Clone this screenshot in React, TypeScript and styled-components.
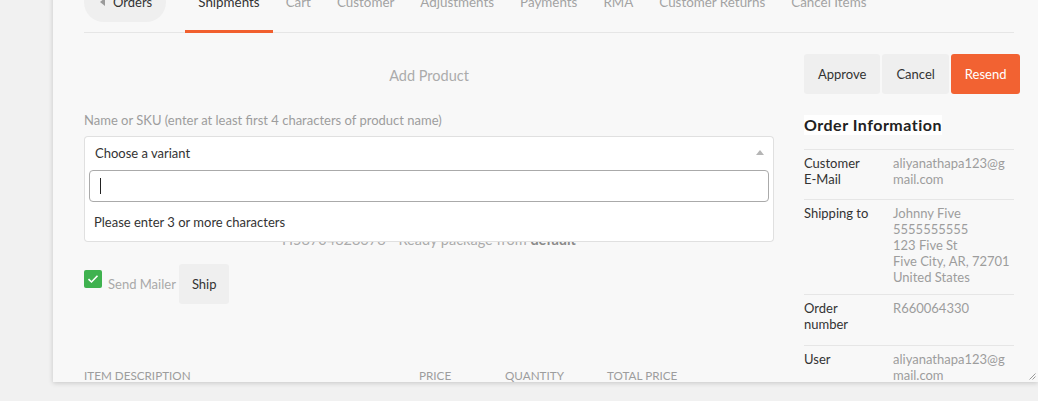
import React from "react";
import styled, { createGlobalStyle } from "styled-components";

const Global = createGlobalStyle`
  html, body { margin: 0; padding: 0; background: #f1f1f1; overflow: hidden; }
  body { font-family: Lato, "Open Sans", sans-serif; color: #333; }
  * { box-sizing: border-box; }
`;

const Stage = styled.div`
  display: flow-root;
  height: 401px;
  padding-left: 53px;
  overflow: hidden;
`;

const Panel = styled.div`
  position: relative;
  margin-top: -40px;
  height: 422px;
  background: #f8f8f8;
  box-shadow: 0 1px 5px rgba(0, 0, 0, 0.18);
  padding: 0 24px 0 31px;
  overflow: hidden;
`;

const TabBar = styled.div`
  display: flex;
  align-items: flex-end;
  height: 73px;
  border-bottom: 1px solid #e6e6e6;
`;

const OrdersButton = styled.div`
  display: flex;
  align-items: center;
  gap: 8px;
  height: 40px;
  margin: 0 19px 10px 0;
  padding: 0 14px 0 16px;
  border-radius: 20px;
  background: #efefef;
  font-size: 13px;
  color: #333;
`;

const LeftTri = styled.span`
  width: 0;
  height: 0;
  border-top: 4px solid transparent;
  border-bottom: 4px solid transparent;
  border-right: 5px solid #9a9a9a;
`;

const Tab = styled.div<{ $active?: boolean }>`
  padding: 0 13px 19px;
  margin-bottom: -1px;
  border-bottom: 3px solid ${(p) => (p.$active ? "#f15f2e" : "transparent")};
  font-size: 13.4px;
  line-height: 17px;
  color: ${(p) => (p.$active ? "#333" : "#a3a3a3")};
  white-space: nowrap;
`;

const Body = styled.div`
  display: grid;
  grid-template-columns: 690px 210px;
  column-gap: 30px;
`;

const LeftCol = styled.div`
  display: flex;
  flex-direction: column;
`;

const AddProduct = styled.div`
  margin-top: 34px;
  text-align: center;
  font-size: 14.5px;
  line-height: 18px;
  color: #ababab;
`;

const FieldLabel = styled.div`
  margin-top: 27px;
  font-size: 13px;
  line-height: 16px;
  color: #9d9d9d;
`;

const SelectWrap = styled.div`
  position: relative;
  z-index: 2;
  margin-top: 8px;
  height: 32px;
  padding: 0 10px;
  border: 1px solid #e0e0e0;
  border-bottom: none;
  border-radius: 4px 4px 0 0;
  background: #fff;
  font-size: 13px;
  line-height: 32px;
  color: #333;
`;

const UpArrow = styled.span`
  position: absolute;
  right: 9px;
  top: 13px;
  width: 0;
  height: 0;
  border-left: 4px solid transparent;
  border-right: 4px solid transparent;
  border-bottom: 5px solid #b5b5b5;
`;

const Dropdown = styled.div`
  position: absolute;
  top: 100%;
  left: -1px;
  right: -1px;
  padding: 2px 4px 0;
  border: 1px solid #e0e0e0;
  border-top: none;
  border-radius: 0 0 4px 4px;
  background: #fff;
`;

const SearchBox = styled.div`
  display: flex;
  align-items: center;
  height: 32px;
  padding-left: 10px;
  border: 1px solid #aaa;
  border-radius: 4px;
  background: #fff;
`;

const Caret = styled.span`
  width: 1px;
  height: 16px;
  background: #222;
`;

const Results = styled.div`
  padding: 12px 5px 11px;
  font-size: 13px;
  line-height: 16px;
  color: #333;
`;

const ShipmentInfo = styled.div`
  margin-top: 63px;
  text-align: center;
  font-size: 14.5px;
  line-height: 17px;
  color: #ababab;
  b { color: #8a8a8a; }
`;

const MailerRow = styled.div`
  display: flex;
  align-items: center;
  height: 40px;
  margin-top: 16px;
`;

const CheckBox = styled.span`
  display: flex;
  align-items: center;
  justify-content: center;
  align-self: flex-start;
  width: 18px;
  height: 18px;
  margin: 6px 6px 0 0;
  border-radius: 2px;
  background: #3fb24f;
`;

const MailerText = styled.span`
  margin-right: 3px;
  font-size: 13px;
  color: #a9a9a9;
`;

const GrayButton = styled.div`
  display: flex;
  align-items: center;
  height: 40px;
  padding: 0 13px;
  border-radius: 3px;
  background: #efefef;
  font-size: 13px;
  color: #333;
`;

const TableHead = styled.div`
  display: grid;
  grid-template-columns: 335px 86px 102px auto;
  margin-top: 64px;
  font-size: 11.7px;
  line-height: 14px;
  color: #9d9d9d;
  text-transform: uppercase;
`;

const RightCol = styled.div`
  display: flex;
  flex-direction: column;
`;

const ActionRow = styled.div`
  display: flex;
  gap: 2px;
  margin-top: 21px;
  white-space: nowrap;
`;

const ActionButton = styled.div<{ $primary?: boolean }>`
  display: flex;
  align-items: center;
  height: 40px;
  padding: 0 14px;
  border-radius: 3px;
  background: ${(p) => (p.$primary ? "#f26232" : "#efefef")};
  color: ${(p) => (p.$primary ? "#fff" : "#333")};
  font-size: 13px;
`;

const Heading = styled.div`
  align-self: flex-start;
  margin: 21px 0 14px;
  background: #fff;
  font-size: 16px;
  font-weight: 700;
  line-height: 20px;
  letter-spacing: 0.5px;
  color: #222;
`;

const InfoRow = styled.div<{ $pb: number }>`
  display: grid;
  grid-template-columns: 89px 1fr;
  padding: 5px 0 ${(p) => p.$pb}px;
  border-top: 1px solid #e6e6e6;
  font-size: 13px;
  line-height: 16px;
`;

const InfoLabel = styled.div`
  padding-right: 20px;
  color: #333;
`;

const InfoValue = styled.div`
  color: #9d9d9d;
  word-break: break-all;
`;

const Resize = styled.svg`
  position: absolute;
  right: 2px;
  bottom: 2px;
`;

const tabs = [
  "Shipments",
  "Cart",
  "Customer",
  "Adjustments",
  "Payments",
  "RMA",
  "Customer Returns",
  "Cancel Items",
];

export default function App() {
  return (
    <>
      <Global />
      <Stage>
        <Panel>
          <TabBar>
            <OrdersButton>
              <LeftTri />
              Orders
            </OrdersButton>
            {tabs.map((t, i) => (
              <Tab key={t} $active={i === 0}>
                {t}
              </Tab>
            ))}
          </TabBar>
          <Body>
            <LeftCol>
              <AddProduct>Add Product</AddProduct>
              <FieldLabel>
                Name or SKU (enter at least first 4 characters of product name)
              </FieldLabel>
              <SelectWrap>
                Choose a variant
                <UpArrow />
                <Dropdown>
                  <SearchBox>
                    <Caret />
                  </SearchBox>
                  <Results>Please enter 3 or more characters</Results>
                </Dropdown>
              </SelectWrap>
              <ShipmentInfo>
                H58704828678 - Ready package from <b>default</b>
              </ShipmentInfo>
              <MailerRow>
                <CheckBox>
                  <svg width="12" height="10" viewBox="0 0 12 10">
                    <path
                      d="M1.5 5.2 L4.5 8 L10.5 1.8"
                      fill="none"
                      stroke="#fff"
                      strokeWidth="1.6"
                    />
                  </svg>
                </CheckBox>
                <MailerText>Send Mailer</MailerText>
                <GrayButton>Ship</GrayButton>
              </MailerRow>
              <TableHead>
                <span>Item Description</span>
                <span>Price</span>
                <span>Quantity</span>
                <span>Total Price</span>
              </TableHead>
            </LeftCol>
            <RightCol>
              <ActionRow>
                <ActionButton>Approve</ActionButton>
                <ActionButton>Cancel</ActionButton>
                <ActionButton $primary>Resend</ActionButton>
              </ActionRow>
              <Heading>Order Information</Heading>
              <InfoRow $pb={12}>
                <InfoLabel>Customer E-Mail</InfoLabel>
                <InfoValue>aliyanathapa123@gmail.com</InfoValue>
              </InfoRow>
              <InfoRow $pb={9}>
                <InfoLabel>Shipping to</InfoLabel>
                <InfoValue>
                  Johnny Five
                  <br />
                  5555555555
                  <br />
                  123 Five St
                  <br />
                  Five City, AR, 72701
                  <br />
                  United States
                </InfoValue>
              </InfoRow>
              <InfoRow $pb={13}>
                <InfoLabel>Order number</InfoLabel>
                <InfoValue>R660064330</InfoValue>
              </InfoRow>
              <InfoRow $pb={12}>
                <InfoLabel>User</InfoLabel>
                <InfoValue>aliyanathapa123@gmail.com</InfoValue>
              </InfoRow>
            </RightCol>
          </Body>
          <Resize width="7" height="7" viewBox="0 0 7 7">
            <path d="M6.5 0.5 L0.5 6.5 M6.5 3.5 L3.5 6.5" stroke="#9a9a9a" strokeWidth="1" />
          </Resize>
        </Panel>
      </Stage>
    </>
  );
}
